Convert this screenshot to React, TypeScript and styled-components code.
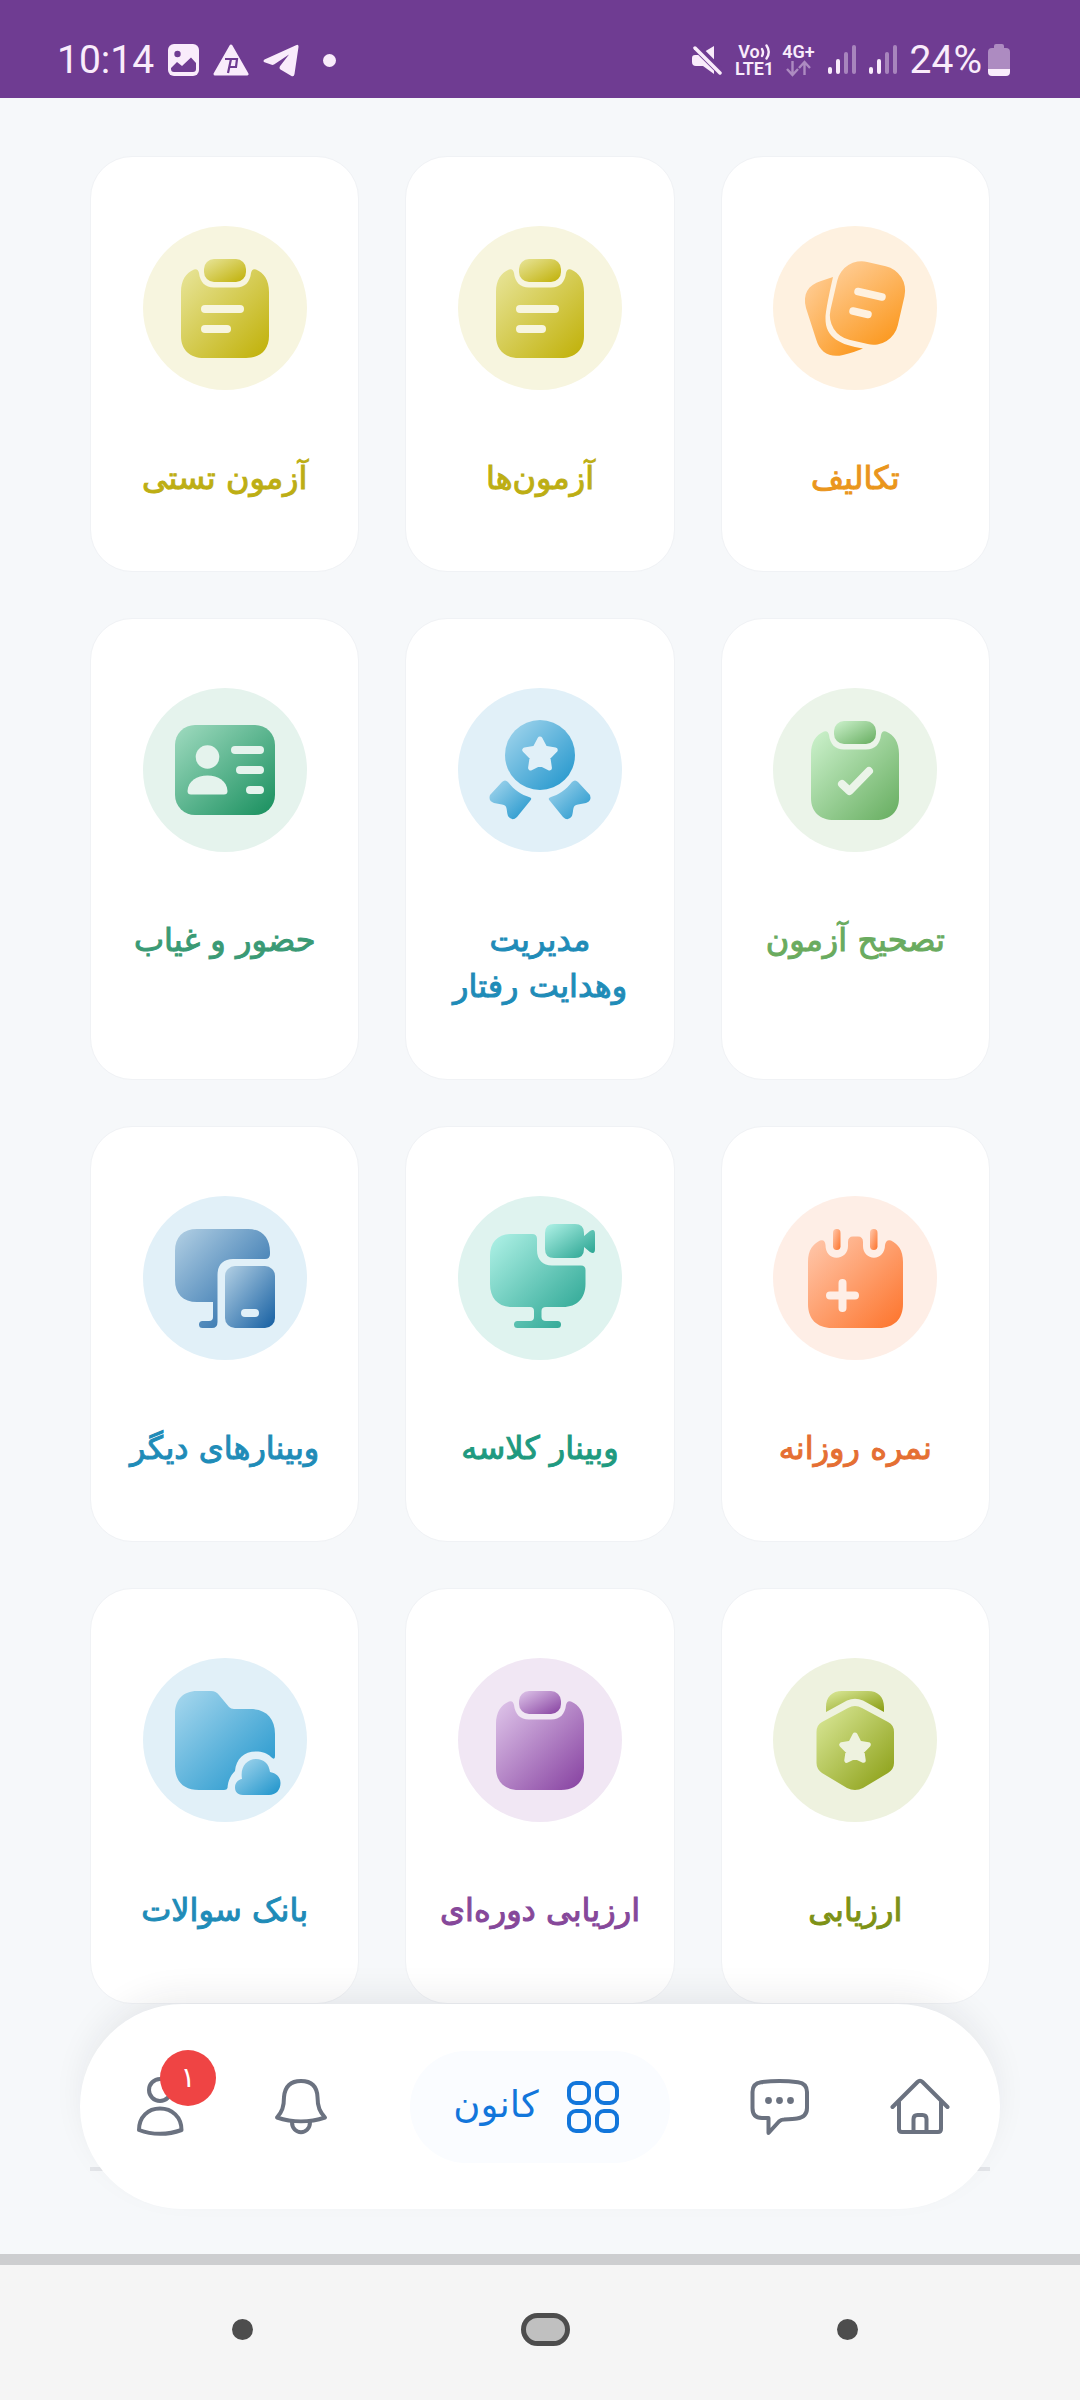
import React from 'react';
import styled, { createGlobalStyle } from 'styled-components';

const persianFont = '"DejaVu Sans", sans-serif';

const GlobalStyle = createGlobalStyle`
  *, *::before, *::after { box-sizing: border-box; }
  body { margin: 0; background: #f6f8fa; font-family: ${persianFont}; }
  button { font: inherit; border: 0; padding: 0; background: none; cursor: pointer; }
  a { text-decoration: none; }
  svg { display: block; flex: none; }
`;

const Screen = styled.div`
  display: flex;
  flex-direction: column;
  min-height: 100vh;
`;

/* ---------- status bar ---------- */

const StatusBar = styled.header`
  display: flex;
  justify-content: space-between;
  align-items: center;
  height: 98px;
  padding: 22px 70px 0 57px;
  background: #6f3c92;
  color: #f9ecfb;
  font-family: Roboto, sans-serif;
`;

const StatusGroup = styled.div<{ $gap: number }>`
  display: flex;
  align-items: center;
  gap: ${(p) => p.$gap}px;
`;

const StatusText = styled.span`
  font-size: 39px;
  line-height: 40px;
`;

const NetworkLabel = styled.span`
  display: flex;
  flex-direction: column;
  align-items: center;
  font-size: 18px;
  line-height: 17px;
  font-weight: 600;
`;

const VoiceRow = styled.span`
  display: flex;
  align-items: center;
`;

const MoreDot = styled.span`
  width: 13px;
  height: 13px;
  margin-left: 10px;
  border-radius: 50%;
  background: currentColor;
`;

const Signal = () => (
  <svg width="28" height="30" viewBox="0 0 28 30" fill="currentColor" aria-hidden="true">
    <rect x="0" y="22" width="4" height="7" rx="2" />
    <rect x="8" y="14" width="4" height="15" rx="2" />
    <rect x="16" y="7" width="4" height="22" rx="2" opacity=".42" />
    <rect x="24" y="0" width="4" height="29" rx="2" opacity=".42" />
  </svg>
);

/* ---------- card grid ---------- */

const Main = styled.main`
  position: relative;
  flex: 1;
  padding: 58px 90px 83px;
`;

const CardGrid = styled.div`
  display: grid;
  grid-template-columns: repeat(3, 1fr);
  gap: 46px;
`;

const Card = styled.a<{ $color: string }>`
  display: flex;
  flex-direction: column;
  align-items: center;
  gap: 65px;
  padding: 69px 16px 70px;
  border: 1px solid #f0f2f5;
  border-radius: 42px;
  background: #fff;
  color: ${(p) => p.$color};
`;

const CardLabel = styled.span`
  font-size: 32px;
  line-height: 46px;
  -webkit-text-stroke: 1px currentColor;
  text-align: center;
  white-space: pre-line;
`;

const Divider = styled.hr`
  height: 4px;
  margin: 163px 0 0;
  border: 0;
  background: #e3e5e9;
`;

type Palette = { tint: string; from: string; to: string };
type IconKind =
  | 'clipLines' | 'clipCheck' | 'clip' | 'notes' | 'idCard' | 'medal'
  | 'calendar' | 'camera' | 'devices' | 'hexBadge' | 'folder';

const starPoints = (cx: number, cy: number, r: number) =>
  Array.from({ length: 10 }, (_, i) => {
    const rad = i % 2 ? r * 0.52 : r;
    const a = (Math.PI / 5) * i - Math.PI / 2;
    return `${(cx + rad * Math.cos(a)).toFixed(2)},${(cy + rad * Math.sin(a)).toFixed(2)}`;
  }).join(' ');

const Star = ({ cx, cy, r, color }: { cx: number; cy: number; r: number; color: string }) => (
  <polygon points={starPoints(cx, cy, r)} fill={color} stroke={color} strokeWidth="5" strokeLinejoin="round" />
);

const Clipboard = () => (
  <>
    <path d="M38 66C38 54 43 47 51 43.500Q55 42 56 47C57 56 62 61.500 71 61.500H93C102 61.500 107 56 108 47Q109 42 113 43.500C121 47 126 54 126 66V110C126 124 117 132 103 132H61C47 132 38 124 38 110Z" />
    <rect x="61" y="33" width="42" height="23" rx="10" />
  </>
);

const drawings: Record<IconKind, (tint: string) => React.ReactNode> = {
  clip: () => <Clipboard />,
  clipLines: (tint) => (
    <>
      <Clipboard />
      <rect x="58" y="79" width="43" height="8" rx="4" fill={tint} />
      <rect x="58" y="99" width="30" height="8" rx="4" fill={tint} />
    </>
  ),
  clipCheck: (tint) => (
    <>
      <Clipboard />
      <path d="M69 96L76.500 103L96 83" fill="none" stroke={tint} strokeWidth="8" strokeLinecap="round" strokeLinejoin="round" />
    </>
  ),
  notes: (tint) => (
    <>
      <path d="M60 51L48 55C35 59 29.500 68 33 82L43 113C47 127 57 132 70 129C78 127 84 125 90 122.500C68 119 52 112 52.500 92C53 82 58 60 60 51Z" />
      <rect x="60" y="37" width="69" height="80" rx="25" transform="rotate(13 94.500 77)" />
      <path d="M85 65.500L109 71M80 85L95 88.500" fill="none" stroke={tint} strokeWidth="7.500" strokeLinecap="round" />
    </>
  ),
  idCard: (tint) => (
    <>
      <rect x="32" y="37" width="100" height="90" rx="20" />
      <g fill={tint}>
        <circle cx="64.500" cy="69" r="11.800" />
        <path d="M44.500 103C45 93 54 87.500 64.500 87.500C75 87.500 84 93 84.500 103Q84.500 106.500 81 106.500H48Q44.500 106.500 44.500 103Z" />
        <rect x="88" y="58" width="33" height="8" rx="4" />
        <rect x="93" y="78" width="28" height="8" rx="4" />
        <rect x="103" y="98" width="18" height="8" rx="4" />
      </g>
    </>
  ),
  medal: (tint) => (
    <>
      <circle cx="82" cy="67" r="35" />
      <path d="M50 94C56 102 64 107 71 109Q75 110 72 113L59 129Q54 134 50 128C48 122 50 117 44 116.500L36 115Q30 113 32 107L44 94Q47 91 50 94Z" />
      <path d="M114 94C108 102 100 107 93 109Q89 110 92 113L105 129Q110 134 114 128C116 122 114 117 120 116.500L128 115Q134 113 132 107L120 94Q117 91 114 94Z" />
      <Star cx={82} cy={67} r={16} color={tint} />
    </>
  ),
  calendar: (tint) => (
    <>
      <path d="M35 66C35 54 40 48 47 44.500Q52 43 52.500 49C52.500 57 57 61.700 63.500 61.700C70 61.700 75 57 75 50V46Q75 40.500 80 40.500H85Q90 40.500 90 46V50C90 57 95 61.700 101 61.700C107 61.700 112 57 112 49Q113 43 118 44.500C125 48 130 54 130 66V108C130 123 121 132 106 132H59C44 132 35 123 35 108Z" />
      <rect x="60" y="33" width="7.500" height="21" rx="3.700" />
      <rect x="97" y="33" width="7.500" height="21" rx="3.700" />
      <path d="M57 99.500H82M69.500 87V112" fill="none" stroke={tint} strokeWidth="8" strokeLinecap="round" />
    </>
  ),
  camera: () => (
    <>
      <path d="M54 38H74Q79 38 79 43V54C79 64 85 69.500 94 69.500H123Q127.500 69.500 127.500 74V88C127.500 102 119 111 105 111H88Q83.500 111 83.500 115V121Q83.500 125 88 125H99.500A3.500 3.500 0 0 1 99.500 132H59.500A3.500 3.500 0 0 1 59.500 125H72Q76 125 76 121V115Q76 111 72 111H54C40 111 32 102 32 88V60C32 46 40 38 54 38Z" />
      <path d="M96 28H117Q126 28 126 37V40L132 35Q137 32 137 38V53Q137 59 132 56L126 51V53Q126 62 117 62H96Q87 62 87 53V37Q87 28 96 28Z" />
    </>
  ),
  devices: (tint) => (
    <>
      <path d="M54 33H105C119 33 127 42 127 56V58Q127 63 122 63H90C80 63 74.500 69 74.500 79V126Q74.500 132 69 132H59.500A3.500 3.500 0 0 1 59.500 125H66Q70 125 70 121V106H54C40 106 32 98 32 84V55C32 41 40 33 54 33Z" />
      <rect x="82" y="70" width="50" height="62" rx="10" />
      <rect x="98" y="113" width="18" height="8" rx="4" fill={tint} />
    </>
  ),
  hexBadge: (tint) => (
    <>
      <path d="M53 54V49C53 39 59 33 69 33H95C105 33 111 39 111 49V54L90 42.500Q82 39 74 42.500Z" />
      <path d="M75 50Q82 46 89 50L115 64Q121 67 121 74V105Q121 111 115 115L90 130Q82 134 74 130L49 115Q43.500 111 43.500 105V74Q43.500 67 49 64Z" />
      <Star cx={82} cy={91} r={14} color={tint} />
    </>
  ),
  folder: () => (
    <>
      <path d="M54 33H68Q73 33 76 37L86 49Q88 51 91 51H107C123 51 132 60 132 76V98Q132 103 128 99C124 95 119 93.500 113 93.500C101 93.500 93 101 92 113C88 117 85 122 84.500 130Q84 132 81 132H56C40 132 32 123 32 108V56C32 42 40 33 54 33Z" />
      <path d="M100 137C94 137 92 133 92 129.500C92 125 95 121.500 99 121C97 110 103 101 113 101C121 101 126 106 127 114C133 115 137.500 119 137.500 125C137.500 132 133 137 126 137Z" />
    </>
  ),
};

const CardIcon = ({ id, kind, palette }: { id: string; kind: IconKind; palette: Palette }) => (
  <svg width="164" height="164" viewBox="0 0 164 164" aria-hidden="true">
    <defs>
      <linearGradient id={id} x1="0" y1="0" x2="1" y2="1">
        <stop offset="0" stopColor={palette.from} />
        <stop offset="1" stopColor={palette.to} />
      </linearGradient>
    </defs>
    <circle cx="82" cy="82" r="82" fill={palette.tint} />
    <g fill={`url(#${id})`}>{drawings[kind](palette.tint)}</g>
  </svg>
);

const yellow: Palette = { tint: '#f7f5df', from: '#e8e59a', to: '#c0b006' };
const sky: Palette = { tint: '#e1f0f8', from: '#a8d8ee', to: '#1c93cb' };

const cards: { id: string; label: string; color: string; kind: IconKind; palette: Palette }[] = [
  { id: 'homework', label: 'تکالیف', color: '#ea961c', kind: 'notes', palette: { tint: '#fef1e0', from: '#ffcf9a', to: '#fb9517' } },
  { id: 'exams', label: 'آزمون‌ها', color: '#bdae14', kind: 'clipLines', palette: yellow },
  { id: 'quiz', label: 'آزمون تستی', color: '#bdae14', kind: 'clipLines', palette: yellow },
  { id: 'grading', label: 'تصحیح آزمون', color: '#6aab5f', kind: 'clipCheck', palette: { tint: '#ebf4e9', from: '#cdf2cd', to: '#66ad5f' } },
  { id: 'behaviour', label: 'مدیریت\nوهدایت رفتار', color: '#1f8cb8', kind: 'medal', palette: sky },
  { id: 'attendance', label: 'حضور و غیاب', color: '#3a9a75', kind: 'idCard', palette: { tint: '#e5f3ed', from: '#a0dbc0', to: '#188f5e' } },
  { id: 'daily', label: 'نمره روزانه', color: '#e56f33', kind: 'calendar', palette: { tint: '#feeee6', from: '#ffc9ae', to: '#fd732a' } },
  { id: 'webinar', label: 'وبینار کلاسه', color: '#1f9a80', kind: 'camera', palette: { tint: '#dff3ef', from: '#b0f2e7', to: '#22a08d' } },
  { id: 'webinars', label: 'وبینارهای دیگر', color: '#1f8cb8', kind: 'devices', palette: { tint: '#e1f0f8', from: '#b3d0e4', to: '#155fa2' } },
  { id: 'evaluation', label: 'ارزیابی', color: '#7e9216', kind: 'hexBadge', palette: { tint: '#eef2df', from: '#dcea9c', to: '#889c10' } },
  { id: 'periodic', label: 'ارزیابی دوره‌ای', color: '#86489a', kind: 'clip', palette: { tint: '#f1e7f4', from: '#dfc6ea', to: '#8640a0' } },
  { id: 'bank', label: 'بانک سوالات', color: '#1f8cb8', kind: 'folder', palette: sky },
];

/* ---------- bottom navigation ---------- */

const BottomNav = styled.nav`
  position: absolute;
  left: 80px;
  right: 80px;
  bottom: 45px;
  display: flex;
  align-items: center;
  justify-content: space-between;
  height: 205px;
  padding: 0 50px;
  border-radius: 103px;
  background: #fff;
  box-shadow: 0 -14px 36px -8px rgba(30, 35, 45, 0.09);
`;

const NavButton = styled.button`
  position: relative;
  width: 60px;
  height: 60px;
  color: #6b7280;
`;

const ActiveButton = styled.button`
  && {
    display: flex;
    align-items: center;
    justify-content: center;
    gap: 28px;
    width: 260px;
    height: 112px;
    padding-right: 8px;
    border-radius: 56px;
    background: #fafcff;
    color: #1276db;
  }
`;

const ActiveLabel = styled.span`
  font-size: 37px;
  line-height: 48px;
  padding-bottom: 4px;
`;

const Badge = styled.span`
  position: absolute;
  left: 30px;
  top: -27px;
  display: flex;
  align-items: center;
  justify-content: center;
  width: 56px;
  height: 56px;
  border-radius: 50%;
  background: #ef4444;
  color: #fff;
  font-size: 28px;
  line-height: 40px;
`;

const LineIcon = ({ children }: { children: React.ReactNode }) => (
  <svg width="60" height="60" viewBox="0 0 60 60" fill="none" stroke="currentColor" strokeWidth="4" strokeLinecap="round" strokeLinejoin="round" aria-hidden="true">
    {children}
  </svg>
);

/* ---------- system bar ---------- */

const Edge = styled.div`
  height: 11px;
  background: #cdced0;
`;

const SystemBar = styled.footer`
  display: flex;
  align-items: center;
  justify-content: space-between;
  height: 135px;
  padding: 0 222px 7px 232px;
  background: #f5f5f5;
`;

const SystemDot = styled.button`
  && {
    width: 21px;
    height: 21px;
    border-radius: 50%;
    background: #4d4d4d;
  }
`;

const SystemHome = styled.button`
  && {
    width: 49px;
    height: 33px;
    border: 5px solid #4d4d4d;
    border-radius: 17px;
    background: #c0c0c0;
  }
`;

export default function App() {
  return (
    <Screen>
      <GlobalStyle />
      <StatusBar>
        <StatusGroup $gap={14}>
          <StatusText>10:14</StatusText>
          <svg width="31" height="32" viewBox="0 0 31 32" aria-hidden="true">
            <rect width="31" height="32" rx="6" fill="currentColor" />
            <circle cx="9.500" cy="10" r="3.200" fill="#6f3c92" />
            <path d="M3 24L9 18L14 22L23 13.500L28 19V25Q28 28 25 28H6Q3 28 3 25Z" fill="#6f3c92" />
          </svg>
          <svg width="36" height="32" viewBox="0 0 36 32" aria-hidden="true">
            <path d="M18 2L34 30H2Z" fill="currentColor" stroke="currentColor" strokeWidth="3" strokeLinejoin="round" />
            <path d="M12 15H24L23 23H17M18 15L15 29" fill="none" stroke="#6f3c92" strokeWidth="2.200" />
          </svg>
          <svg width="36" height="33" viewBox="0 0 36 33" fill="currentColor" aria-hidden="true">
            <path d="M1.500 15.500L33 1.200Q35.800 0 35.500 3L31.500 30Q31 33.500 28 31.800L17.500 25.500Q15.500 24 17.500 21.500L26 10.500L11 20.500Q9.500 21.200 8 20.600L1.500 18.200Q-.5 17 1.500 15.500Z" />
          </svg>
          <MoreDot />
        </StatusGroup>
        <StatusGroup $gap={13}>
          <svg width="30" height="30" viewBox="0 0 30 30" aria-hidden="true">
            <path d="M0 13Q0 10 3 10H7L12 7L22 1V29L11 21H4Q0 21 0 17Z" fill="currentColor" />
            <path d="M2 0L30 28" stroke="#6f3c92" strokeWidth="8" />
            <path d="M3 3L28 28" stroke="currentColor" strokeWidth="3.500" strokeLinecap="round" />
          </svg>
          <StatusGroup $gap={8}>
            <NetworkLabel>
              <VoiceRow>
                Vo
                <svg width="11" height="16" viewBox="0 0 11 16" fill="none" stroke="currentColor" strokeWidth="2.400" strokeLinecap="round" aria-hidden="true">
                  <path d="M2 5Q4 8.500 2 12M6.500 1.500Q11 8 6.500 14.500" />
                </svg>
              </VoiceRow>
              <span>LTE1</span>
            </NetworkLabel>
            <NetworkLabel>
              <span>4G+</span>
              <svg width="25" height="17" viewBox="0 0 25 17" fill="none" stroke="currentColor" strokeWidth="2.400" opacity=".45" aria-hidden="true">
                <path d="M6.500 1V14M1 9L6.500 15L12 9M18.500 15V3M13 8L18.500 2L24 8" />
              </svg>
            </NetworkLabel>
          </StatusGroup>
          <Signal />
          <Signal />
          <StatusGroup $gap={6}>
            <StatusText>24%</StatusText>
            <svg width="22" height="32" viewBox="0 0 22 32" fill="currentColor" aria-hidden="true">
              <path d="M6 4V2Q6 0 8 0H14Q16 0 16 2V4H18Q22 4 22 8V25H0V8Q0 4 4 4Z" opacity=".45" />
              <path d="M0 25H22V28Q22 32 18 32H4Q0 32 0 28Z" />
            </svg>
          </StatusGroup>
        </StatusGroup>
      </StatusBar>

      <Main dir="rtl" lang="fa">
        <CardGrid>
          {cards.map((c) => (
            <Card key={c.id} href={`#${c.id}`} $color={c.color}>
              <CardIcon id={`fill-${c.id}`} kind={c.kind} palette={c.palette} />
              <CardLabel>{c.label}</CardLabel>
            </Card>
          ))}
        </CardGrid>
        <Divider />

        <BottomNav>
          <NavButton type="button" aria-label="خانه">
            <LineIcon>
              <path d="M2.500 30L27.500 5Q30 2.500 32.500 5L57.500 30" />
              <path d="M9 25V52Q9 55 12 55H48Q51 55 51 52V25" />
              <path d="M23.500 54V42Q23.500 38 27.500 38H32.500Q36.500 38 36.500 42V54" />
            </LineIcon>
          </NavButton>
          <NavButton type="button" aria-label="پیام‌ها">
            <LineIcon>
              <path d="M18.500 41V56L29 44.500Q31 42.500 34 42.500C40 42.200 44 42 47 41.500C54 40.500 57 37 57 31V15C57 9 54 6 48 5.200C36 3.800 23 3.800 11 5.200C5 6 2.500 9 2.500 15V31C2.500 37 5 41 12 41Z" />
              <g fill="currentColor" stroke="none">
                <circle cx="18.500" cy="23.500" r="3.400" />
                <circle cx="29.500" cy="23.500" r="3.400" />
                <circle cx="40.500" cy="23.500" r="3.400" />
              </g>
            </LineIcon>
          </NavButton>
          <ActiveButton type="button" aria-current="page">
            <svg width="52" height="52" viewBox="0 0 52 52" fill="none" stroke="currentColor" strokeWidth="4" aria-hidden="true">
              <rect x="2" y="2" width="20" height="20" rx="7" />
              <rect x="30" y="2" width="20" height="20" rx="7" />
              <rect x="2" y="30" width="20" height="20" rx="7" />
              <rect x="30" y="30" width="20" height="20" rx="7" />
            </svg>
            <ActiveLabel>کانون</ActiveLabel>
          </ActiveButton>
          <NavButton type="button" aria-label="اعلان‌ها">
            <LineIcon>
              <path d="M7 40.500C12 35 14 30 14 20C15 9 21 4 31 4C41 4 47 9 47.500 20C47.500 30 50 35 55 40.500C40 45.500 22 45.500 7 40.500Z" />
              <path d="M22 45C22 58.500 40 58.500 40 45" />
            </LineIcon>
          </NavButton>
          <NavButton type="button" aria-label="حساب کاربری">
            <LineIcon>
              <circle cx="30" cy="13" r="11" />
              <path d="M9 53C9 40 18 31.500 30 31.500C42 31.500 51.500 40 51.500 53C38 58 22 58 9 53Z" />
            </LineIcon>
            <Badge>۱</Badge>
          </NavButton>
        </BottomNav>
      </Main>

      <Edge />
      <SystemBar>
        <SystemDot type="button" aria-label="Recent apps" />
        <SystemHome type="button" aria-label="Home" />
        <SystemDot type="button" aria-label="Back" />
      </SystemBar>
    </Screen>
  );
}
